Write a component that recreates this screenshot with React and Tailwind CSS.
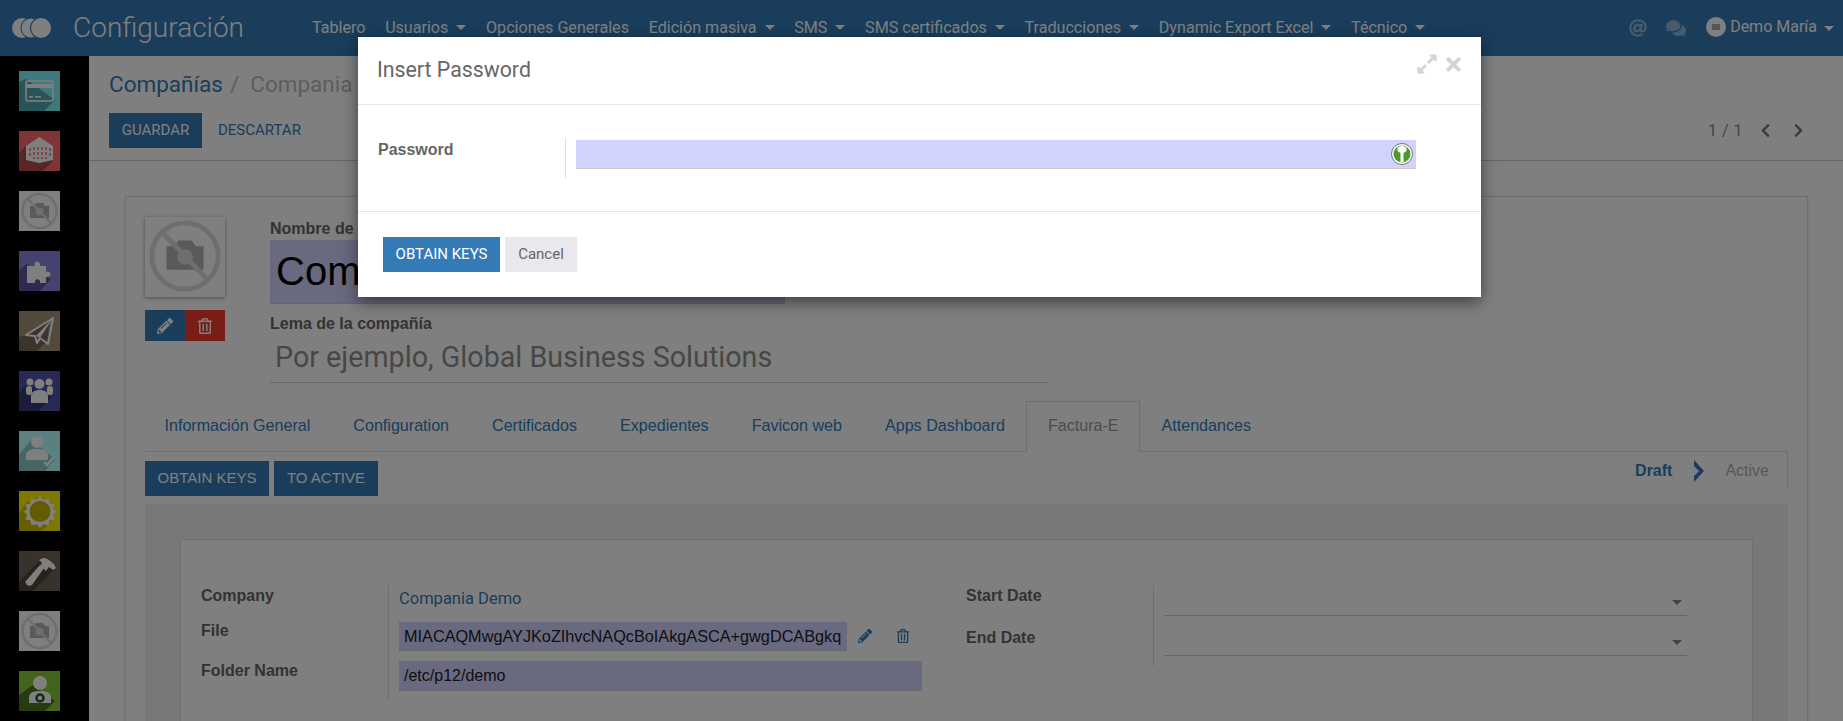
import { FaAt, FaComments, FaChevronLeft, FaChevronRight, FaPencilAlt, FaRegTrashAlt, FaExpandAlt, FaTimes } from 'react-icons/fa';

const navItems = [
  { label: 'Tablero' },
  { label: 'Usuarios', caret: true },
  { label: 'Opciones Generales' },
  { label: 'Edición masiva', caret: true },
  { label: 'SMS', caret: true },
  { label: 'SMS certificados', caret: true },
  { label: 'Traducciones', caret: true },
  { label: 'Dynamic Export Excel', caret: true },
  { label: 'Técnico', caret: true },
];

const tabs = ['Información General', 'Configuration', 'Certificados', 'Expedientes', 'Favicon web', 'Apps Dashboard', 'Factura-E', 'Attendances'];

const Caret = ({ className = 'border-t-white' }) => (
  <span className={`inline-block w-0 h-0 border-x-[5px] border-t-[5px] border-x-transparent ${className}`}></span>
);

const NoPhoto = () => (
  <g>
    <circle cx="20.5" cy="20" r="17" fill="none" stroke="#dcdcdc" strokeWidth="2.5" />
    <path d="M11 15h4l2-3h7l2 3h4v12H11z" fill="#b4b4b4" />
    <circle cx="20.5" cy="20.5" r="4" fill="#dcdcdc" />
    <path d="M9 8l23 24" stroke="#dcdcdc" strokeWidth="2.5" />
  </g>
);

// shadow polygon + glyph for the app tiles of the sidebar
const Tile = ({ bg, shadow, long, children }) => (
  <svg width="41" height="40" viewBox="0 0 41 40" className="block shrink-0">
    <rect width="41" height="40" fill={bg} />
    {long && <polygon points={long} fill={shadow} />}
    {children}
  </svg>
);

const tiles = [
  <Tile key="1" bg="#7ff2f8" shadow="#55a9b0" long="0,11 7,8 36,29 25,40 0,40">
    <rect x="7" y="10" width="27" height="20" rx="2" fill="none" stroke="#fff" strokeWidth="1.6" />
    <rect x="7" y="13" width="27" height="4" fill="#fff" />
    <rect x="10" y="25" width="4" height="1.6" fill="#fff" />
    <rect x="16" y="25" width="6" height="1.6" fill="#fff" />
  </Tile>,
  <Tile key="2" bg="#ff6a6a" shadow="#b54a4a" long="0,22 7,14 34,30 24,40 0,40">
    <path d="M20.5 6L34 15v14l-13.5 3L7 29V15z" fill="#fff" />
    <path d="M11 17v3M11 22v3M15 16v3M15 21v3M15 26v2M19 16v3M19 21v3M19 26v2M23 16v3M23 21v3M23 26v2M27 16v3M27 21v3M27 26v2M31 17v3M31 22v3" stroke="#ff6a6a" strokeWidth="1.5" />
  </Tile>,
  <Tile key="3" bg="#ffffff"><NoPhoto /></Tile>,
  <Tile key="4" bg="#8c84e0" shadow="#5c569c" long="0,20 7,13 32,28 21,40 0,40">
    <path d="M8 15h8c-2-6 6-6 5 0h6v6c6-2 6 6 0 5v6H21c1-5-6-5-5 0H8z" fill="#fff" />
  </Tile>,
  <Tile key="5" bg="#a6947c" shadow="#756856" long="0,26 7,24 31,7 28,30 18,40 0,40">
    <path d="M7 24L34 7l-5 26-8-6-3 5-2-7z" fill="none" stroke="#fff" strokeWidth="2" strokeLinejoin="round" />
    <path d="M17 25L34 7l-13 20z" fill="#fff" />
  </Tile>,
  <Tile key="6" bg="#4e54a6" shadow="#343878" long="0,22 7,14 33,26 19,40 0,40">
    <circle cx="11" cy="11" r="3.5" fill="#fff" /><circle cx="30" cy="11" r="3.5" fill="#fff" />
    <circle cx="20.5" cy="13" r="5" fill="#fff" />
    <rect x="7" y="15" width="6" height="9" rx="3" fill="#fff" /><rect x="28" y="15" width="6" height="9" rx="3" fill="#fff" />
    <path d="M12 32v-7c0-4 4-6 8.500-6s8.500 2 8.500 6v7z" fill="#fff" />
  </Tile>,
  <Tile key="7" bg="#b8ffff" shadow="#8ccac8" long="0,24 12,9 36,28 26,40 0,40">
    <circle cx="18" cy="11" r="6" fill="#fff" />
    <path d="M7 29v-5c0-4 5-6 11-6s11 2 11 6v5z" fill="#fff" />
    <path d="M25 31l3 3 7-8" fill="none" stroke="#fff" strokeWidth="2.4" />
  </Tile>,
  <Tile key="8" bg="#fff000" shadow="#d0c000" long="0,22 9,10 34,28 23,40 0,40">
    <path d="M21 5l3.500 4 5-1.500 1 5 5 1-1.500 5 3.500 2-3.500 3 1.500 5-5 1-1 5-5-1.500-3.500 4-3.500-4-5 1.500-1-5-5-1 1.500-5-3.500-3 3.500-2-1.500-5 5-1 1-5 5 1.500z" fill="#fff" />
    <circle cx="21" cy="20.500" r="10.500" fill="#c8b400" />
  </Tile>,
  <Tile key="9" bg="#6e6758" shadow="#4c4738" long="0,31 24,6 38,16 14,40 0,40">
    <path d="M8 34l-2-3 15-17 4 3-12 17c-2 1-4 1-5 0z" fill="#fff" />
    <path d="M20 9c5-4 8-2 15 4l2 4-3 2-4-3-3 4-6-5 2-3z" fill="#fff" />
  </Tile>,
  <Tile key="10" bg="#ffffff"><NoPhoto /></Tile>,
  <Tile key="11" bg="#88c83c" shadow="#4c7820" long="0,24 14,14 36,30 26,40 0,40">
    <circle cx="21" cy="12" r="7" fill="#fff" />
    <path d="M10 32v-6c0-4 4-6 11-6s11 2 11 6v6z" fill="#fff" />
    <circle cx="21" cy="27" r="3.500" fill="none" stroke="#2e5a10" strokeWidth="2.5" />
  </Tile>,
];

const Label = ({ children, className = '' }) => (
  <div className={`font-['Liberation_Sans',sans-serif] font-bold text-[16px] leading-[22px] text-[#666] ${className}`}>{children}</div>
);

const App = () => {
  return (
    <div className="relative h-[721px] overflow-hidden bg-white font-['Roboto',sans-serif]">
      {/* Navbar */}
      <header className="h-14 bg-[#337ab7] flex items-center text-white">
        <svg width="40" height="22" viewBox="0 0 40 22" className="ml-[12px] shrink-0">
          <circle cx="10" cy="11" r="10" fill="#fff" />
          <circle cx="19" cy="11" r="10.500" fill="#337ab7" />
          <circle cx="19" cy="11" r="9.500" fill="#fff" />
          <circle cx="29" cy="11" r="11" fill="#337ab7" />
          <circle cx="29" cy="11" r="10" fill="#fff" />
        </svg>
        <span className="ml-[21px] text-[28px] leading-none w-[239px] shrink-0 font-light">Configuración</span>
        <nav className="flex items-center gap-[19.7px] text-[16.1px]">
          {navItems.map((item) => (
            <span key={item.label} className="flex items-center gap-[8px] whitespace-nowrap">
              {item.label}
              {item.caret && <Caret />}
            </span>
          ))}
        </nav>
        <div className="ml-auto mr-[9px] flex items-center">
          <FaAt className="text-[#8fb4d6] text-[18px] mr-[19px]" />
          <FaComments className="text-[#8fb4d6] text-[20px] mr-[20px]" />
          <span className="w-5 h-5 rounded-full bg-white flex items-center justify-center mr-[4px] -mt-[3px]">
            <span className="w-2 h-1.5 bg-[#aaa]"></span>
          </span>
          <span className="text-[16px] -mt-[3px] mr-[7px]">Demo María</span>
          <Caret />
        </div>
      </header>

      <div className="flex">
        {/* Sidebar */}
        <aside className="w-[89px] h-[665px] bg-black flex flex-col gap-5 pt-[15px] pl-[19px] shrink-0">
          {tiles}
        </aside>

        <main className="flex-1 min-w-0">
          {/* Control panel */}
          <div className="h-[105px] border-b border-[#ccc] px-5 relative">
            <div className="pt-[13px] text-[22.5px] leading-[30px] whitespace-nowrap">
              <span className="text-[#337ab7]">Compañías</span>
              <span className="text-[#bbb] ml-[7px] mr-[11px]">/</span>
              <span className="text-[#bbb]">Compania Demo</span>
            </div>
            <div className="mt-[14px] flex items-center justify-between">
              <div className="flex items-center">
                <button className="h-[35px] w-[93px] bg-[#337ab7] text-white text-[15px]">GUARDAR</button>
                <button className="h-[35px] ml-[16px] text-[#337ab7] text-[15px]">DESCARTAR</button>
              </div>
              <div className="flex items-center text-[#888] text-[16px] mr-[17px]">
                <span className="tracking-[0.5px]">1 / 1</span>
                <FaChevronLeft className="ml-[15px] text-[15px] text-[#777]" />
                <FaChevronRight className="ml-[18px] text-[15px] text-[#777]" />
              </div>
            </div>
          </div>

          {/* Sheet */}
          <div className="pt-[35px] pl-[36px] pr-[35px]">
            <div className="h-[600px] border border-[#dedede] pt-5 px-[19px] shadow-[0_2px_6px_rgba(0,0,0,0.1)]">
              <div className="flex">
                <div className="w-[80px] shrink-0">
                  <div className="w-[80px] h-[80px] bg-white shadow-[0_1px_4px_rgba(0,0,0,0.4)]">
                    <svg width="80" height="80" viewBox="0 0 41 41"><NoPhoto /></svg>
                  </div>
                  <div className="mt-[13px] flex h-[31px]">
                    <span className="w-10 bg-[#337ab7] flex items-center justify-center text-white text-[16px]"><FaPencilAlt /></span>
                    <span className="w-10 bg-[#f63a2e] flex items-center justify-center text-white text-[16px]"><FaRegTrashAlt /></span>
                  </div>
                </div>
                <div className="ml-[45px] w-[778px]">
                  <Label className="pt-[1px]">Nombre de la compañía</Label>
                  <div className="w-[515px] h-[64px] bg-[#d2d2ff] border-b border-[#ccc] pl-[6px] font-['Liberation_Sans',sans-serif] text-[40px] leading-[62px] text-black">Compania Demo</div>
                  <Label className="mt-[9px]">Lema de la compañía</Label>
                  <div className="mt-[1px] h-[47px] border-b border-[#ccc] pl-[5px] text-[28.7px] leading-[42px] text-[#8f8f8f]">Por ejemplo, Global Business Solutions</div>
                </div>
              </div>

              {/* Tabs */}
              <ul className="mt-[18px] h-[51px] flex border-b border-[#dedede] font-['Liberation_Sans',sans-serif] text-[16.1px]">
                {tabs.map((t) => (
                  <li
                    key={t}
                    className={`h-[51px] px-[20.5px] first:-ml-[2px] flex items-start border border-b-0 whitespace-nowrap pt-[11px] ${
                      t === 'Factura-E' ? 'border-[#dedede] bg-white text-[#999]' : 'border-transparent text-[#337ab7]'
                    }`}
                  >
                    {t}
                  </li>
                ))}
              </ul>

              {/* Status bar */}
              <div className="h-[52px] flex items-start justify-between font-['Liberation_Sans',sans-serif]">
                <div className="flex gap-[5px] mt-[9px]">
                  <button className="h-[35px] w-[124px] bg-[#337ab7] text-white text-[15px]">OBTAIN KEYS</button>
                  <button className="h-[35px] w-[104px] bg-[#337ab7] text-white text-[15px]">TO ACTIVE</button>
                </div>
                <div className="h-[37px] border-r border-[#dedede] flex items-center text-[16px] pr-[18px]">
                  <span className="font-bold text-[#337ab7]">Draft</span>
                  <svg width="12" height="22" viewBox="0 0 12 22" className="ml-[21px] mr-[20px]"><path d="M1 0l10 11L1 22l0-6 5-5-5-5z" fill="#337ab7" /></svg>
                  <span className="text-[#b0b0b0]">Active</span>
                </div>
              </div>

              {/* Form group */}
              <div className="h-[300px] bg-[#f0f0f0] px-[35px] pt-[35px]">
                <div className="h-[300px] bg-white border border-[#dedede] pt-[45px] pl-[20px] flex gap-[44px]">
                  <div className="w-[721px] grid grid-cols-[187px_1fr] grid-rows-[35px_36px_44px]">
                    <Label>Company</Label>
                    <div className="border-l border-[#dedede] pl-[10px] pt-[3px] text-[#337ab7] text-[16.5px] leading-[22px]">Compania Demo</div>
                    <Label>File</Label>
                    <div className="border-l border-[#dedede] pl-[10px] flex items-start pt-[2px]">
                      <div className="w-[448px] h-[29px] bg-[#d2d2ff] border-b border-[#ccc] pl-[5px] font-['Liberation_Sans',sans-serif] text-[16.25px] leading-[28px] text-[#222] overflow-hidden whitespace-nowrap">MIACAQMwgAYJKoZIhvcNAQcBoIAkgASCA+gwgDCABgkq</div>
                      <FaPencilAlt className="ml-[11px] mt-[7px] text-[#337ab7] text-[14px]" />
                      <FaRegTrashAlt className="ml-[24px] mt-[7px] text-[#337ab7] text-[14px]" />
                    </div>
                    <Label className="pt-[4px]">Folder Name</Label>
                    <div className="border-l border-[#dedede] pl-[10px] pt-[5px]">
                      <div className="w-[523px] h-[30px] bg-[#d2d2ff] border-b border-[#ccc] pl-[5px] font-['Liberation_Sans',sans-serif] text-[16px] leading-[29px] text-[#222]">/etc/p12/demo</div>
                    </div>
                  </div>
                  <div className="w-[721px] h-[81px] grid grid-cols-[187px_1fr] grid-rows-[40px_41px]">
                    <Label>Start Date</Label>
                    <div className="border-l border-[#dedede] pl-[10px]">
                      <div className="h-[31px] border-b border-[#ccc] flex items-center justify-end pr-[5px] pt-[4px]"><Caret className="border-t-[#888]" /></div>
                    </div>
                    <Label className="pt-[2px]">End Date</Label>
                    <div className="border-l border-[#dedede] pl-[10px]">
                      <div className="h-[31px] border-b border-[#ccc] flex items-center justify-end pr-[5px] pt-[4px]"><Caret className="border-t-[#888]" /></div>
                    </div>
                  </div>
                </div>
              </div>
            </div>
          </div>
        </main>
      </div>

      {/* Backdrop + modal */}
      <div className="absolute inset-0 bg-black/50"></div>
      <div className="absolute left-[358px] top-[37px] w-[1123px] h-[260px] bg-white shadow-[0_5px_15px_rgba(0,0,0,0.5)] flex flex-col">
        <div className="h-[68px] border-b border-[#e5e5e5] pl-[19px] pb-[2px] flex items-center justify-between shrink-0">
          <span className="text-[21.3px] text-[#666]">Insert Password</span>
          <div className="flex items-center text-[#d4d4d4] mr-[17px] -mt-[11px]">
            <FaExpandAlt className="text-[22px] mr-[5px]" />
            <FaTimes className="text-[21px]" />
          </div>
        </div>
        <div className="h-[107px] border-b border-[#e5e5e5] pt-[33px] pl-[20px] flex items-start shrink-0">
          <Label className="w-[187px] pt-[1px]">Password</Label>
          <div className="border-l border-[#dedede] h-[40px] pl-[10px]">
            <div className="w-[840px] h-[29px] mt-[2px] bg-[#d2d2ff] border-b border-[#ccc] flex items-center justify-end pr-[3px]">
              <svg width="22" height="22" viewBox="0 0 22 22">
                <circle cx="11" cy="11" r="10.500" fill="#fff" stroke="#777" />
                <circle cx="11" cy="11" r="8.500" fill="#4a9a2e" />
                <path d="M11 2.500l4.500 2v3.500l-3 2v9h-3v-9l-3-2V4.500z" fill="#fff" />
              </svg>
            </div>
          </div>
        </div>
        <div className="pt-[25px] pl-[25px] flex gap-[5px]">
          <button className="h-[35px] w-[117px] bg-[#337ab7] text-white text-[15px]">OBTAIN KEYS</button>
          <button className="h-[35px] w-[72px] bg-[#e9e8ec] text-[#666] text-[15px]">Cancel</button>
        </div>
      </div>
    </div>
  );
};

export default App;
